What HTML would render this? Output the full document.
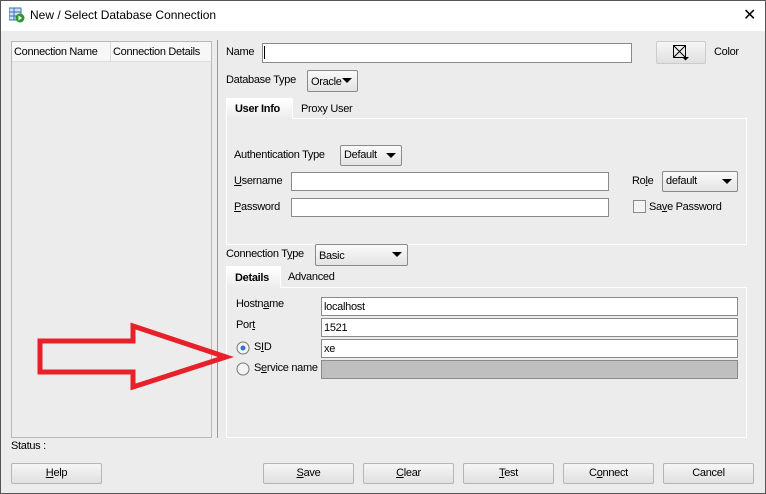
<!DOCTYPE html><html><head><style>
*{box-sizing:border-box;margin:0;padding:0}
body{width:766px;height:494px;overflow:hidden;font-family:"Liberation Sans",sans-serif;font-size:11px;letter-spacing:-0.3px;color:#000;position:relative;background:#ececec}
.a{position:absolute;white-space:nowrap}
.in{position:absolute;background:#fff;border:1px solid #8a8a8a}
.cb{position:absolute;border:1px solid #8a8a8a;border-radius:2px;background:linear-gradient(#fafafa,#e3e3e3);padding:3px 0 0 3px}
.cb:after{content:"";position:absolute;right:5px;top:7px;border:5px solid transparent;border-top:5px solid #000;border-bottom:0}
.btn{position:absolute;top:463px;height:21px;width:91px;border:1px solid #b5b5b5;border-radius:2px;background:linear-gradient(#f6f6f6,#e0e0e0);text-align:center;line-height:19px}
.pan{position:absolute;border:1px solid #fff}
u{text-decoration:underline}
</style></head><body>
<div class="a" style="left:0;top:0;width:766px;height:494px;border:1px solid #555"></div>
<div class="a" style="left:1px;top:1px;width:764px;height:30px;background:#fff"></div>
<svg class="a" style="left:9px;top:7px" width="16" height="16"><rect x="0" y="1" width="12" height="12" fill="#cfdff0" stroke="#3d6fb0"/><line x1="0" y1="5" x2="12" y2="5" stroke="#3d6fb0"/><line x1="0" y1="9" x2="12" y2="9" stroke="#3d6fb0"/><line x1="5" y1="1" x2="5" y2="13" stroke="#3d6fb0"/><circle cx="11" cy="11" r="4.5" fill="#2e9a2e"/><path d="M9.5 8.5 L13 11 L9.5 13.5Z" fill="#fff"/></svg>
<div class="a" style="left:30px;top:8px;font-size:12px;letter-spacing:0">New / Select Database Connection</div>
<div class="a" style="left:743px;top:5px;font-size:16px;letter-spacing:0">✕</div>
<div class="a" style="left:11px;top:41px;width:201px;height:397px;border:1px solid #b9b9b9"></div>
<div class="a" style="left:12px;top:42px;width:199px;height:20px;background:#f7f7f7;border-bottom:1px solid #ddd"></div>
<div class="a" style="left:110px;top:42px;width:1px;height:20px;background:#ddd"></div>
<div class="a" style="left:14px;top:46px">Connection Name</div>
<div class="a" style="left:113px;top:46px">Connection Details</div>
<div class="a" style="left:217px;top:40px;width:1px;height:398px;background:#999"></div>
<div class="a" style="left:226px;top:46px">Name</div>
<div class="in" style="left:262px;top:43px;width:370px;height:20px"></div>
<div class="a" style="left:264px;top:46px;width:1px;height:13px;background:#000"></div>
<div class="a" style="left:656px;top:41px;width:50px;height:23px;border:1px solid #ccc;border-radius:2px;background:linear-gradient(#f6f6f6,#e0e0e0)"></div>
<svg class="a" style="left:673px;top:45px" width="18" height="16"><rect x="0.5" y="0.5" width="12" height="12" fill="none" stroke="#000"/><path d="M0.5 0.5L12.5 12.5M12.5 0.5L0.5 12.5" stroke="#000"/><path d="M9 12h7l-3.5 3.5z" fill="#000"/></svg>
<div class="a" style="left:714px;top:46px">Color</div>
<div class="a" style="left:226px;top:74px">Database Type</div>
<div class="cb" style="left:307px;top:70px;width:51px;height:22px;padding-top:5px">Oracle</div>
<div class="pan" style="left:226px;top:118px;width:521px;height:127px"></div>
<div class="a" style="left:226px;top:98px;width:67px;height:21px;border:1px solid #fff;border-bottom:none;background:linear-gradient(#fff,#ececec);font-weight:bold;padding:4px 0 0 8px">User Info</div>
<div class="a" style="left:301px;top:103px">Proxy User</div>
<div class="a" style="left:234px;top:149px">Authentication Type</div>
<div class="cb" style="left:340px;top:145px;width:62px;height:21px">Default</div>
<div class="a" style="left:234px;top:175px"><u>U</u>sername</div>
<div class="in" style="left:291px;top:172px;width:318px;height:19px"></div>
<div class="a" style="left:234px;top:201px"><u>P</u>assword</div>
<div class="in" style="left:291px;top:198px;width:318px;height:19px"></div>
<div class="a" style="left:632px;top:175px">Ro<u>l</u>e</div>
<div class="cb" style="left:662px;top:171px;width:76px;height:21px">default</div>
<div class="a" style="left:633px;top:200px;width:13px;height:13px;border:1px solid #8a8a8a;background:#f4f4f4"></div>
<div class="a" style="left:649px;top:201px">Sa<u>v</u>e Password</div>
<div class="a" style="left:226px;top:248px">Connection T<u>y</u>pe</div>
<div class="cb" style="left:315px;top:244px;width:93px;height:22px;padding-top:5px">Basic</div>
<div class="pan" style="left:226px;top:287px;width:521px;height:151px"></div>
<div class="a" style="left:226px;top:266px;width:55px;height:22px;border:1px solid #fff;border-bottom:none;background:linear-gradient(#fff,#ececec);font-weight:bold;padding:5px 0 0 8px">Details</div>
<div class="a" style="left:288px;top:271px">Advanced</div>
<div class="a" style="left:236px;top:298px">Hostn<u>a</u>me</div>
<div class="a" style="left:236px;top:319px">Por<u>t</u></div>
<svg class="a" style="left:236px;top:341px" width="14" height="14"><circle cx="7" cy="7" r="6" fill="#f4f4f4" stroke="#777"/><circle cx="7" cy="7" r="2.5" fill="#3b6fd0"/></svg>
<div class="a" style="left:254px;top:341px">S<u>I</u>D</div>
<svg class="a" style="left:236px;top:362px" width="14" height="14"><circle cx="7" cy="7" r="6" fill="#f4f4f4" stroke="#777"/></svg>
<div class="a" style="left:254px;top:362px">S<u>e</u>rvice name</div>
<div class="in" style="left:321px;top:297px;width:417px;height:19px;padding:3px 0 0 2px">localhost</div>
<div class="in" style="left:321px;top:318px;width:417px;height:19px;padding:3px 0 0 2px">1521</div>
<div class="in" style="left:321px;top:339px;width:417px;height:19px;padding:3px 0 0 2px">xe</div>
<div class="in" style="left:321px;top:360px;width:417px;height:19px;background:#bfbfbf"></div>
<svg class="a" style="left:0;top:0" width="766" height="494"><polygon points="40,341 133,341 133,326 226,357 133,387 133,372 40,372" fill="none" stroke="#e8202a" stroke-width="5" stroke-linejoin="miter"/></svg>
<div class="a" style="left:11px;top:440px">Status :</div>
<div class="btn" style="left:11px"><u>H</u>elp</div>
<div class="btn" style="left:263px"><u>S</u>ave</div>
<div class="btn" style="left:363px"><u>C</u>lear</div>
<div class="btn" style="left:463px"><u>T</u>est</div>
<div class="btn" style="left:563px">C<u>o</u>nnect</div>
<div class="btn" style="left:663px">Cancel</div>
</body></html>
